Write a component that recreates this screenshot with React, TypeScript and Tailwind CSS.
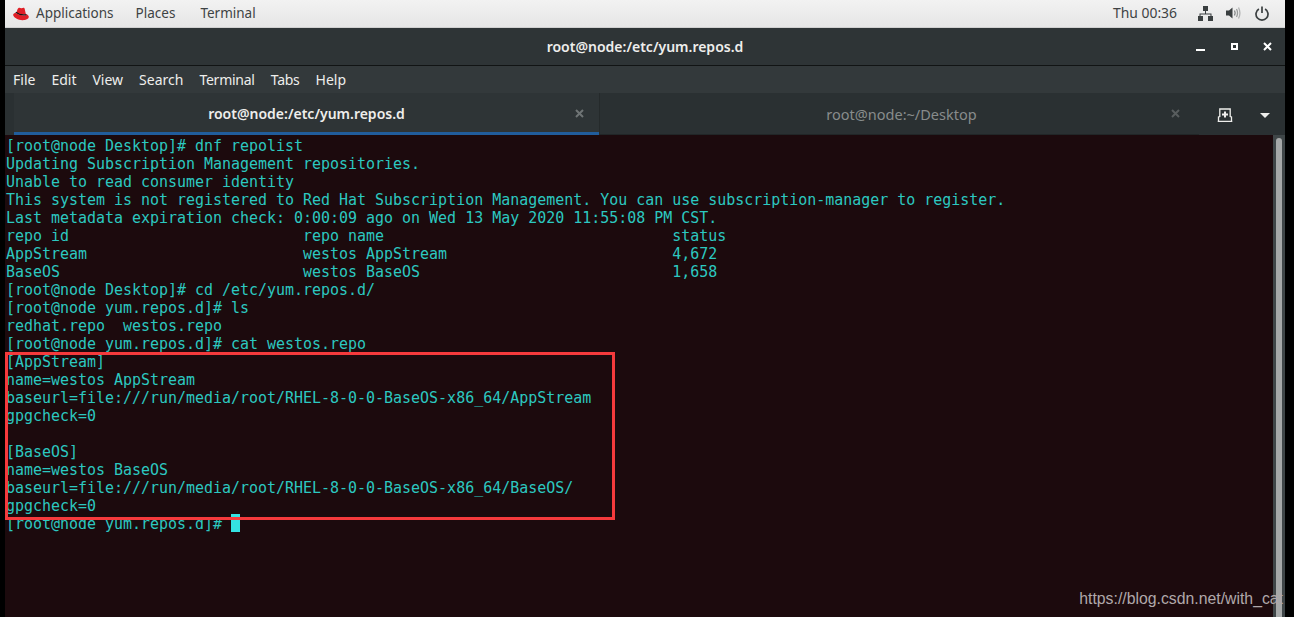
import React from 'react';

const lines = [
  '[root@node Desktop]# dnf repolist',
  'Updating Subscription Management repositories.',
  'Unable to read consumer identity',
  'This system is not registered to Red Hat Subscription Management. You can use subscription-manager to register.',
  'Last metadata expiration check: 0:00:09 ago on Wed 13 May 2020 11:55:08 PM CST.',
  'repo id                          repo name                                status',
  'AppStream                        westos AppStream                         4,672',
  'BaseOS                           westos BaseOS                            1,658',
  '[root@node Desktop]# cd /etc/yum.repos.d/',
  '[root@node yum.repos.d]# ls',
  'redhat.repo  westos.repo',
  '[root@node yum.repos.d]# cat westos.repo',
  '[AppStream]',
  'name=westos AppStream',
  'baseurl=file:///run/media/root/RHEL-8-0-0-BaseOS-x86_64/AppStream',
  'gpgcheck=0',
  '',
  '[BaseOS]',
  'name=westos BaseOS',
  'baseurl=file:///run/media/root/RHEL-8-0-0-BaseOS-x86_64/BaseOS/',
  'gpgcheck=0',
];

const menus = ['File', 'Edit', 'View', 'Search', 'Terminal', 'Tabs', 'Help'];

const RedHat = () => (
  <svg width="16" height="14" viewBox="0 0 16 14" className="mr-[7px]">
    <path d="M3.500 6.500C4 4 4.500 1 6 .8c1-.2 1.500.5 2.500.4 1-.1 1.800-.8 2.500-.4 1 .6 1 3.500 2 6.700z" fill="#e01f26" />
    <path d="M2.300 5.800C1 6.200 0 7 .2 8.200c.4 2.200 5 4.800 9.300 5 3.300.1 6.300-1.300 6.300-3.400 0-1.400-1.200-2.300-2.600-2.900L13.500 8.300C9.500 8.800 4.500 7.500 2.300 5.800z" fill="#e01f26" />
    <path d="M2.800 5.200c2.500 1.800 7.500 3 10.700 2.400" fill="none" stroke="#1c1010" strokeWidth="1.200" />
  </svg>
);

const NetworkIcon = () => (
  <svg width="15" height="15" viewBox="0 0 15 15" fill="#3a3f40">
    <rect x="5" y="0" width="5" height="5" />
    <rect x="0" y="10" width="5" height="5" />
    <rect x="10" y="10" width="5" height="5" />
    <path d="M7 5h1v2.500h5.500V10h-1V8.500h-10V10h-1V7.500H7z" />
  </svg>
);

const VolumeIcon = () => (
  <svg width="15" height="14" viewBox="0 0 15 14" fill="none">
    <path d="M0 4.500h3L6.500 1.500v11L3 9.500H0z" fill="#3a3f40" />
    <path d="M8.500 4.500c.8 1.500.8 3.500 0 5" stroke="#808484" strokeWidth="1.300" />
    <path d="M10.500 3c1.300 2.500 1.300 5.500 0 8" stroke="#9a9d9d" strokeWidth="1.300" />
    <path d="M12.500 1.500c1.800 3.500 1.800 7.500 0 11" stroke="#b0b2b2" strokeWidth="1.300" />
  </svg>
);

const PowerIcon = () => (
  <svg width="14" height="15" viewBox="0 0 14 15" fill="none" stroke="#3a3f40" strokeWidth="1.700">
    <path d="M3.900 3a6 6 0 1 0 6.200 0" />
    <path d="M7 0.500v6.500" />
  </svg>
);

const CloseX = ({ color }: { color: string }) => (
  <svg width="9" height="9" viewBox="0 0 9 9" stroke={color} strokeWidth="2">
    <path d="M1 1l7 7M8 1l-7 7" />
  </svg>
);

const NewTabIcon = () => (
  <svg width="16" height="14" viewBox="0 0 16 14" fill="none" stroke="#eeeeec" strokeWidth="1.300">
    <path d="M.700 13.300h14.600M1.500 13V9L2.800 8.500V1h10.400v7.500L14.500 9v4" />
    <path d="M8 3.500v6M5 6.500h6" strokeWidth="2" />
  </svg>
);

export default function App() {
  return (
    <div className="relative flex h-[617px] w-[1294px] overflow-hidden bg-black pl-[5px] pr-[9px] font-['Liberation_Sans',sans-serif]">
      <div className="flex min-w-0 flex-1 flex-col">
        {/* gnome top bar */}
        <div className="flex h-[28px] items-center justify-between border-b border-[#d0d0d0] bg-gradient-to-b from-[#f2f2f2] to-[#e6e6e6] pl-[8px] pr-[16px] font-['Noto_Sans',sans-serif] text-[13.500px] text-[#3e4344]">
          <div className="flex items-center">
            <RedHat />
            <span>Applications</span>
            <span className="ml-[22px]">Places</span>
            <span className="ml-[25px]">Terminal</span>
          </div>
          <div className="flex items-center">
            <span className="mr-[21px] text-[13.900px]">Thu 00:36</span>
            <NetworkIcon />
            <div className="ml-[13px] mr-[14px]"><VolumeIcon /></div>
            <PowerIcon />
          </div>
        </div>

        {/* title bar */}
        <div className="relative flex h-[38px] items-center justify-center border-b border-[#111414] bg-[#2e3436] font-['Noto_Sans',sans-serif] text-[14px] text-[#eeeeec]">
          <span className="font-semibold">root@node:/etc/yum.repos.d</span>
          <div className="absolute right-[13px] top-[14px] flex items-center">
            <div className="mr-[26px] mt-[6px] h-[2px] w-[9px] bg-white" />
            <div className="mr-[25px] flex h-[7px] w-[7px] items-center justify-center bg-white">
              <div className="h-[3px] w-[3px] bg-[#2e3436]" />
            </div>
            <CloseX color="#ffffff" />
          </div>
        </div>

        {/* menu bar */}
        <div className="flex h-[27px] items-center gap-[16px] bg-[#33393b] pl-[8px] font-['Noto_Sans',sans-serif] text-[14px] text-[#eeeeec]">
          {menus.map((m) => (
            <span key={m} className={m === 'Terminal' || m === 'Tabs' ? 'tracking-[-0.25px]' : ''}>{m}</span>
          ))}
        </div>

        {/* tabs */}
        <div className="flex h-[42px] bg-[#2a3032] font-['Noto_Sans',sans-serif] text-[14px]">
          <div className="w-[9px]" />
          <div className="relative flex w-[585px] items-center justify-center border-b-[3px] border-[#215d9c] bg-[#2e3436] pt-[2px] font-semibold text-[#eeeeec]">
            <span>root@node:/etc/yum.repos.d</span>
            <div className="absolute right-[15px] top-[16px]"><CloseX color="#6f7475" /></div>
          </div>
          <div className="relative flex w-[600px] items-center justify-center border-b border-l border-b-[#212627] border-l-[#252a2b] pl-[4px] pt-[2px] text-[14.500px] text-[#888c8c]">
            <span>root@node:~/Desktop</span>
            <div className="absolute right-[19px] top-[16px]"><CloseX color="#585d5e" /></div>
          </div>
          <div className="flex flex-1 items-center pl-[18px] pt-[2px]">
            <NewTabIcon />
            <div className="ml-[27px] h-0 w-0 border-x-[5px] border-t-[5px] border-x-transparent border-t-[#eeeeec]" />
          </div>
        </div>

        {/* terminal */}
        <div className="relative min-h-0 flex-1 bg-[#1c0a0d]">
          <pre className="pl-[1px] pt-[2px] font-['DejaVu_Sans_Mono',monospace] text-[14.960px] leading-[18px] text-[#2cc8c0]">
            {lines.join('\n')}
            {'\n'}
            <span>[root@node yum.repos.d]# </span>
            <span className="inline-block h-[18px] w-[9px] -translate-y-[1px] bg-[#34e2e2] align-top" />
          </pre>
          {/* red highlight box */}
          <div className="absolute left-0 top-[217px] h-[168px] w-[610px] border-[3px] border-[#f53a3c]" />
          {/* scrollbar */}
          <div className="absolute bottom-0 right-0 top-0 w-[12px] bg-[#3f4648]">
            <div className="ml-[3px] mt-[3px] h-[479px] w-[6px] rounded-t-full bg-[#a6a9a9]" />
          </div>
        </div>
      </div>

      {/* csdn watermark */}
      <span className="absolute right-[11px] top-[587px] text-[15.800px] text-[#b0a8aa]">https://blog.csdn.net/with_cat</span>
    </div>
  );
}
